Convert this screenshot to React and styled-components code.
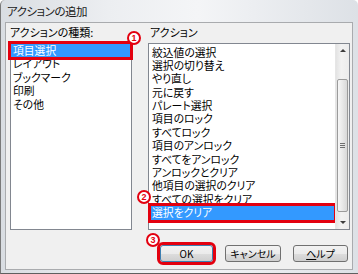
import styled, { createGlobalStyle } from "styled-components";

const GlobalStyle = createGlobalStyle`
  html, body {
    margin: 0;
    padding: 0;
    background: #ffffff;
  }
  body {
    font-family: "Noto Sans CJK JP", "Noto Sans", sans-serif;
    font-feature-settings: "palt";
    color: #000;
  }
`;

const Window = styled.div`
  width: 358px;
  height: 274px;
  box-sizing: border-box;
  display: flex;
  flex-direction: column;
  border-left: 1px solid #7a7a7a;
  border-bottom: 1px solid #5f5f5f;
  border-radius: 5px 5px 0 0;
  background: linear-gradient(to right, #d9dde2, #eceef1 30%, #f4f5f7 55%, #dde1e6);
`;

const TitleBar = styled.div`
  height: 22px;
  display: flex;
  align-items: center;
  padding-left: 6px;
  font-size: 11.5px;
  letter-spacing: -0.5px;
  color: #1a1a1a;
`;

const Body = styled.div`
  position: relative;
  flex: 1;
  margin: 0 5px 3px 4px;
  background: #f0f0f0;
  border: 1px solid #a9abae;
  display: flex;
  flex-direction: column;
  padding: 2px 2px 0 4px;
`;

const Columns = styled.div`
  display: grid;
  grid-template-columns: 122px 202px;
  column-gap: 16px;
`;

const Column = styled.div`
  display: flex;
  flex-direction: column;
`;

const Label = styled.div`
  font-size: 11px;
  line-height: 14px;
  height: 14px;
  margin-bottom: 4px;
  padding-left: ${(p) => p.$indent || 0}px;
`;

const ListBox = styled.div`
  height: 187px;
  box-sizing: border-box;
  border: 1px solid #828790;
  background: #ffffff;
  display: flex;
`;

const Items = styled.div`
  flex: 1;
  padding: ${(p) => p.$pad}px 0 0 ${(p) => p.$side}px;
`;

const Item = styled.div`
  height: 13.4px;
  line-height: 13.4px;
  font-size: 10.8px;
  padding-left: ${(p) => p.$inset}px;
  white-space: nowrap;
  margin-right: 1px;
  background: ${(p) => (p.$selected ? "#3399ff" : "transparent")};
  color: ${(p) => (p.$selected ? "#ffffff" : "#000000")};
  outline: ${(p) => (p.$marked ? "3px solid #e3000f" : "none")};
`;

const ScrollBar = styled.div`
  width: 13px;
  display: flex;
  flex-direction: column;
  background: linear-gradient(to right, #e3e3e3, #f2f2f2 40%, #ececec);
  border-left: 1px solid #e6e6e6;
`;

const ArrowCell = styled.div`
  height: 13px;
  display: flex;
  align-items: center;
  justify-content: center;
`;

const Triangle = styled.span`
  width: 0;
  height: 0;
  border-left: 3px solid transparent;
  border-right: 3px solid transparent;
  ${(p) =>
    p.$dir === "up"
      ? "border-bottom: 3px solid #3d3d3d;"
      : "border-top: 3px solid #3d3d3d;"}
`;

const Track = styled.div`
  flex: 1;
  display: flex;
  flex-direction: column;
  padding: 22px 1px 4px 1px;
`;

const Thumb = styled.div`
  flex: 1;
  border: 1px solid #9b9b9b;
  border-radius: 2px;
  background: linear-gradient(to right, #f7f7f7, #e8e8e8 50%, #d8d8d8);
  display: flex;
  align-items: center;
  justify-content: center;
`;

const Grip = styled.div`
  width: 5px;
  height: 5px;
  background: repeating-linear-gradient(
    to bottom,
    #6f6f6f 0,
    #6f6f6f 1px,
    transparent 1px,
    transparent 2px
  );
`;

const ButtonRow = styled.div`
  display: flex;
  justify-content: flex-end;
  gap: 12px;
  margin-top: 15px;
  padding-right: 2px;
`;

const Button = styled.div`
  width: ${(p) => p.$w}px;
  height: 17px;
  box-sizing: border-box;
  border: 1px solid ${(p) => (p.$default ? "#3c7fb1" : "#707070")};
  border-radius: 3px;
  background: linear-gradient(#f2f2f2, #ebebeb 50%, #dddddd 51%, #cfcfcf);
  font-size: 10px;
  display: flex;
  align-items: center;
  justify-content: center;
  outline: ${(p) => (p.$marked ? "3px solid #e3000f" : "none")};
  outline-offset: 0;
`;

const Underlined = styled.span`
  text-decoration: underline;
`;

const Badge = styled.span`
  position: absolute;
  left: ${(p) => p.$x}px;
  top: ${(p) => p.$y}px;
  width: 10px;
  height: 10px;
  border: 2px solid #e3000f;
  border-radius: 50%;
  color: #e3000f;
  font-family: "Liberation Sans", sans-serif;
  font-weight: bold;
  font-size: 9px;
  line-height: 10px;
  text-align: center;
  background: #ffffff;
`;

const kinds = ["項目選択", "レイアウト", "ブックマーク", "印刷", "その他"];

const actions = [
  "絞込値の選択",
  "選択の切り替え",
  "やり直し",
  "元に戻す",
  "パレート選択",
  "項目のロック",
  "すべてロック",
  "項目のアンロック",
  "すべてをアンロック",
  "アンロックとクリア",
  "他項目の選択のクリア",
  "すべての選択をクリア",
  "選択をクリア",
];

export default function App() {
  return (
    <>
      <GlobalStyle />
      <Window>
        <TitleBar>アクションの追加</TitleBar>
        <Body>
          <Columns>
            <Column>
              <Label>アクションの種類:</Label>
              <ListBox>
                <Items $pad={0} $side={0}>
                  {kinds.map((k, i) => (
                    <Item key={k} $inset={2} $selected={i === 0} $marked={i === 0}>
                      {k}
                    </Item>
                  ))}
                </Items>
              </ListBox>
            </Column>
            <Column>
              <Label $indent={2}>アクション</Label>
              <ListBox>
                <Items $pad={1.5} $side={2}>
                  {actions.map((a, i) => (
                    <Item
                      key={a}
                      $inset={1}
                      $selected={i === actions.length - 1}
                      $marked={i === actions.length - 1}
                    >
                      {a}
                    </Item>
                  ))}
                </Items>
                <ScrollBar>
                  <ArrowCell>
                    <Triangle $dir="up" />
                  </ArrowCell>
                  <Track>
                    <Thumb>
                      <Grip />
                    </Thumb>
                  </Track>
                  <ArrowCell>
                    <Triangle $dir="down" />
                  </ArrowCell>
                </ScrollBar>
              </ListBox>
            </Column>
          </Columns>
          <ButtonRow>
            <Button $w={53} $default $marked>
              OK
            </Button>
            <Button $w={56}>キャンセル</Button>
            <Button $w={55}>
              <Underlined>ヘ</Underlined>ルプ
            </Button>
          </ButtonRow>
          <Badge $x={121} $y={8}>1</Badge>
          <Badge $x={131} $y={167}>2</Badge>
          <Badge $x={140} $y={210}>3</Badge>
        </Body>
      </Window>
    </>
  );
}
